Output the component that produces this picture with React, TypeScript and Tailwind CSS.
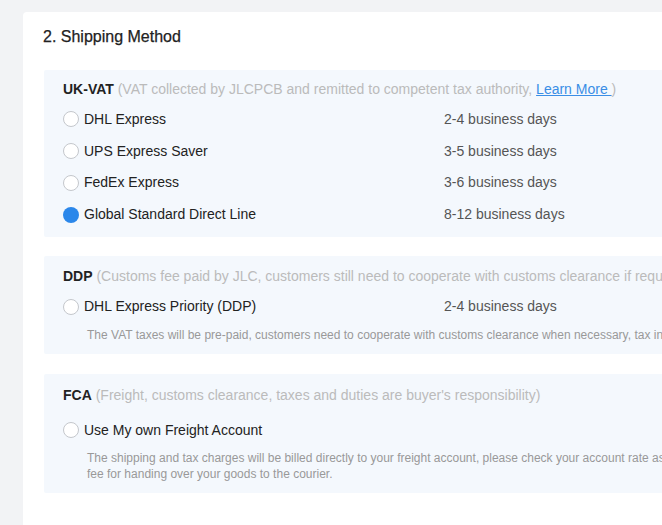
const font = { fontFamily: '"Liberation Sans", Arial, sans-serif' };

type Opt = { label: string; days?: string; checked?: boolean };

function Radio({ checked }: { checked?: boolean }) {
  return checked ? (
    <span className="w-4 h-4 rounded-full bg-[#2b87ea] shrink-0" />
  ) : (
    <span className="w-4 h-4 rounded-full border border-[#c4c7cc] bg-white shrink-0" />
  );
}

function Row({ opt, h }: { opt: Opt; h: string }) {
  return (
    <div className={`flex items-center ${h}`}>
      <div className="flex items-center gap-[5px] w-[381px]">
        <Radio checked={opt.checked} />
        <span className="text-[14px] text-[#222]">{opt.label}</span>
      </div>
      {opt.days && <span className="text-[14px] text-[#555]">{opt.days}</span>}
    </div>
  );
}

const ukOptions: Opt[] = [
  { label: "DHL Express", days: "2-4 business days" },
  { label: "UPS Express Saver", days: "3-5 business days" },
  { label: "FedEx Express", days: "3-6 business days" },
  { label: "Global Standard Direct Line", days: "8-12 business days", checked: true },
];

export default function App() {
  return (
    <div className="h-[525px] overflow-hidden bg-[#f2f3f5] pl-[23px] pt-[12px]" style={font}>
      <div className="w-[1000px] h-[600px] bg-white rounded-tl-[4px] pl-[21px] pt-[13px]">
        <h2 className="-ml-px text-[16px] leading-[24px] text-[#222] mb-[21px] [-webkit-text-stroke:0.25px_#222]">
          2. Shipping Method
        </h2>

        {/* UK-VAT */}
        <div className="bg-[#f4f8fd] pl-[19px] pt-[9px] pb-[6px] rounded-[2px]">
          <div className="h-5 leading-5 text-[14px] whitespace-nowrap">
            <span className="font-bold text-[#222]">UK-VAT</span>
            <span className="text-[#bbbbbb]">
              {" "}(VAT collected by JLCPCB and remitted to competent tax authority,{" "}
              <a className="text-[#3a8ee6] underline">Learn More </a>)
            </span>
          </div>
          <div className="mt-[4.5px]">
            {ukOptions.map((o) => (
              <Row key={o.label} opt={o} h="h-[31.75px]" />
            ))}
          </div>
        </div>

        {/* DDP */}
        <div className="mt-[19px] bg-[#f4f8fd] pl-[19px] pt-[10px] pb-[11px] rounded-[2px]">
          <div className="h-5 leading-5 text-[14px] whitespace-nowrap">
            <span className="font-bold text-[#222]">DDP</span>
            <span className="text-[#bbbbbb]">
              {" "}(Customs fee paid by JLC, customers still need to cooperate with customs clearance if required)
            </span>
          </div>
          <div className="mt-[5px]">
            <Row opt={{ label: "DHL Express Priority (DDP)", days: "2-4 business days" }} h="h-[32px]" />
          </div>
          <p className="mt-[4px] pl-[24px] text-[12px] leading-[16px] text-[#999] whitespace-nowrap">
            The VAT taxes will be pre-paid, customers need to cooperate with customs clearance when necessary, tax invoice will be provided.
          </p>
        </div>

        {/* FCA */}
        <div className="mt-[20px] bg-[#f4f8fd] pl-[19px] pt-[11.5px] pb-[10.5px] rounded-[2px]">
          <div className="h-5 leading-5 text-[14px] whitespace-nowrap">
            <span className="font-bold text-[#222]">FCA</span>
            <span className="text-[#bbbbbb]">
              {" "}(Freight, customs clearance, taxes and duties are buyer's responsibility)
            </span>
          </div>
          <div className="mt-[9px]">
            <Row opt={{ label: "Use My own Freight Account" }} h="h-[32px]" />
          </div>
          <div className="mt-[4px] pl-[24px] text-[12px] leading-[16px] text-[#999] whitespace-nowrap">
            <p>
              The shipping and tax charges will be billed directly to your freight account, please check your account rate as well as the import tax policy. JLCPCB charges a handling
            </p>
            <p>fee for handing over your goods to the courier.</p>
          </div>
        </div>
      </div>
    </div>
  );
}
